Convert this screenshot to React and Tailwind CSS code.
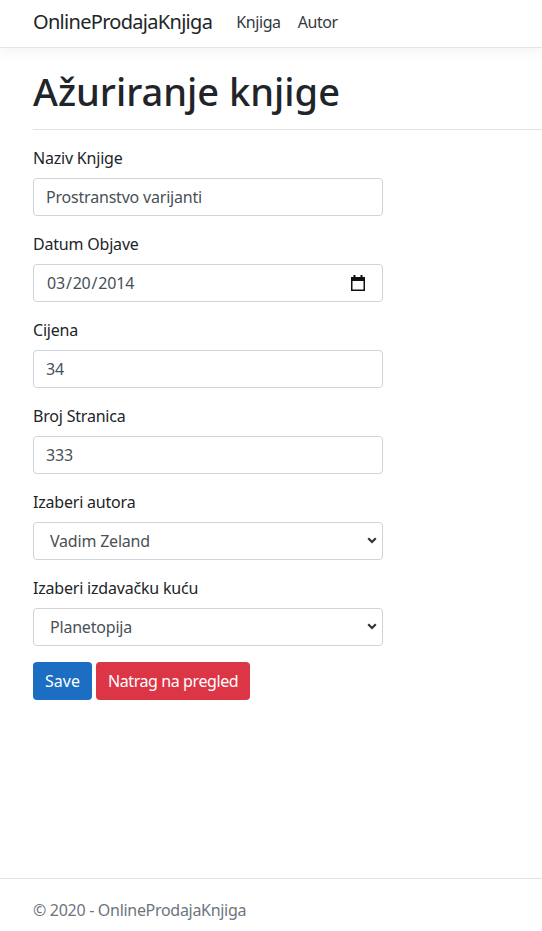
const font = { fontFamily: '"Noto Sans", "Open Sans", sans-serif' };

function Field({ label, children }) {
  return (
    <div className="mb-4">
      <label className="block mb-2 text-base leading-6 tracking-[-0.2px] text-[#212529]">{label}</label>
      {children}
    </div>
  );
}

const inputCls =
  "block w-[350px] h-[38px] px-3 border border-[#ced4da] rounded text-base text-[#495057] bg-white outline-none tracking-[-0.2px]";

function Chevron() {
  return (
    <svg
      width="10"
      height="7"
      viewBox="0 0 10 7"
      className="absolute right-[6px] top-[15px] pointer-events-none"
    >
      <polyline points="1.2,1.2 5,5 8.8,1.2" fill="none" stroke="#333" strokeWidth="2.2" />
    </svg>
  );
}

function CalendarIcon() {
  return (
    <svg
      width="16"
      height="16"
      viewBox="0 0 16 16"
      className="absolute left-[317px] top-[11px] pointer-events-none"
    >
      <rect x="3.5" y="0" width="2" height="3" fill="#111" />
      <rect x="10.5" y="0" width="2" height="3" fill="#111" />
      <rect x="1" y="2" width="14" height="4" fill="#111" />
      <rect x="1.75" y="2.75" width="12.5" height="12.5" fill="none" stroke="#111" strokeWidth="1.5" />
    </svg>
  );
}

function Select({ value }) {
  return (
    <div className="relative w-[350px]">
      <select className={inputCls + " appearance-none pl-4"} defaultValue={value}>
        <option>{value}</option>
      </select>
      <Chevron />
    </div>
  );
}

export default function App() {
  return (
    <div className="min-h-screen flex flex-col bg-white text-[#212529]" style={font}>
      <header className="h-12 border-b border-[#e5e5e5] shadow-[0_4px_12px_rgba(0,0,0,0.05)] flex items-center pb-1 px-[33px]">
        <span className="text-xl tracking-[-0.7px] text-[#212529]">OnlineProdajaKnjiga</span>
        <nav className="flex items-center ml-[24px] gap-[17px] text-base tracking-[-0.4px] text-[#343a40]">
          <a>Knjiga</a>
          <a>Autor</a>
        </nav>
      </header>

      <main className="pl-[33px] pt-[19px]">
        <h1 className="text-[38px] leading-[48px] font-medium mb-2">Ažuriranje knjige</h1>
        <hr className="mt-[14px] mb-4 border-t border-[#e1e1e1]" />

        <form>
          <Field label="Naziv Knjige">
            <input className={inputCls} defaultValue="Prostranstvo varijanti" />
          </Field>
          <Field label="Datum Objave">
            <div className="relative w-[350px]">
              <input
                type="date"
                className={inputCls + " [&::-webkit-calendar-picker-indicator]:opacity-0"}
                defaultValue="2014-03-20"
              />
              <CalendarIcon />
            </div>
          </Field>
          <Field label="Cijena">
            <input className={inputCls} defaultValue="34" />
          </Field>
          <Field label="Broj Stranica">
            <input className={inputCls} defaultValue="333" />
          </Field>
          <Field label="Izaberi autora">
            <Select value="Vadim Zeland" />
          </Field>
          <Field label="Izaberi izdavačku kuću">
            <Select value="Planetopija" />
          </Field>
          <div className="flex gap-1">
            <button type="button" className="h-[38px] px-3 rounded bg-[#1b6ec2] text-white text-base">
              Save
            </button>
            <button
              type="button"
              className="h-[38px] px-3 rounded bg-[#dc3545] text-white text-base tracking-[-0.4px]"
            >
              Natrag na pregled
            </button>
          </div>
        </form>
      </main>

      <div className="flex-1" />

      <footer className="border-t border-[#e1e1e1] h-[53px] pl-[33px] pt-[19px] text-base leading-6 tracking-[-0.3px] text-[#6c757d]">
        © 2020 - OnlineProdajaKnjiga
      </footer>
    </div>
  );
}
